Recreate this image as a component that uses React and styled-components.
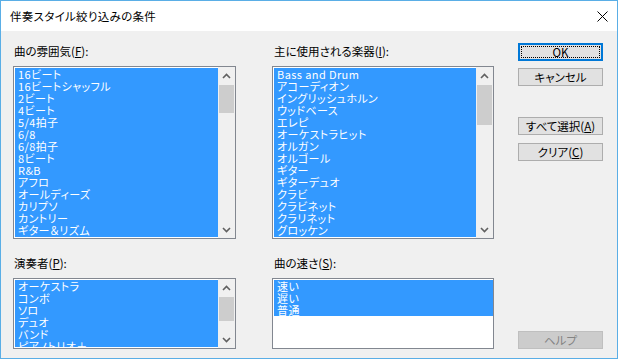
import React from "react";
import styled, { createGlobalStyle } from "styled-components";

const Global = createGlobalStyle`
  html, body { margin: 0; padding: 0; background: #ffffff; }
  body { font-family: "Noto Sans CJK JP", "Noto Sans", sans-serif; }
  * { box-sizing: border-box; }
`;

const Window = styled.div`
  width: 618px;
  height: 359px;
  border: 1px solid #5aaee6;
  background: #f0f0f0;
  display: flex;
  flex-direction: column;
  overflow: hidden;
`;

const TitleBar = styled.div`
  height: 30px;
  background: #ffffff;
  display: flex;
  align-items: center;
  justify-content: space-between;
  padding: 0 9px 0 9px;
  flex-shrink: 0;
`;

const Title = styled.div`
  font-size: 11.5px;
  color: #000;
  line-height: 14px;
  font-feature-settings: "palt";
  letter-spacing: 0.3px;
`;

const CloseBtn = styled.div`
  width: 12px;
  height: 12px;
  display: flex;
  align-items: center;
  justify-content: center;
`;

const Body = styled.div`
  flex: 1;
  display: flex;
  padding: 12px 0 10px 12px;
`;

const Column = styled.div`
  width: ${(p) => p.$w}px;
  margin-right: ${(p) => p.$mr}px;
  display: flex;
  flex-direction: column;
`;

const Label = styled.div`
  height: 16px;
  font-size: 11.5px;
  line-height: 16px;
  color: #000;
  margin-top: ${(p) => p.$mt || 0}px;
  margin-bottom: 7px;
  padding-left: ${(p) => p.$pl || 0}px;
  white-space: nowrap;
  font-feature-settings: "palt";
  u { text-decoration: underline; text-underline-offset: 1px; }
`;

const ListBox = styled.div`
  height: ${(p) => p.$h}px;
  border: 1px solid #828790;
  background: #ffffff;
  display: flex;
  padding: 1px 0 1px 1px;
`;

const Items = styled.div`
  flex: 1;
  overflow: hidden;
  align-self: stretch;
`;

const Item = styled.div`
  height: 12px;
  line-height: 12px;
  font-size: 11px;
  color: #ffffff;
  background: #3399ff;
  padding-left: 3px;
  white-space: nowrap;
  font-feature-settings: "palt";
  letter-spacing: 0.4px;
`;

const ScrollBar = styled.div`
  width: 17px;
  margin-top: -1px;
  margin-bottom: -1px;
  background: #f0f0f0;
  display: flex;
  flex-direction: column;
`;

const ArrowBtn = styled.div`
  height: 17px;
  display: flex;
  align-items: center;
  justify-content: center;
  flex-shrink: 0;
`;

const Track = styled.div`
  flex: 1;
  display: flex;
  flex-direction: column;
`;

const Thumb = styled.div`
  height: ${(p) => p.$h}px;
  margin: 1px 1px 0 1px;
  background: #cdcdcd;
  flex-shrink: 0;
`;

const Button = styled.div`
  width: 85px;
  height: 18px;
  margin-top: ${(p) => p.$mt || 0}px;
  background: ${(p) => (p.$disabled ? "#cccccc" : "#e1e1e1")};
  border: ${(p) =>
    p.$default ? "2px solid #0078d7" : p.$disabled ? "1px solid #bfbfbf" : "1px solid #adadad"};
  color: ${(p) => (p.$disabled ? "#838383" : "#000")};
  font-size: 11.5px;
  font-feature-settings: "palt";
  display: flex;
  align-items: center;
  justify-content: center;
  position: relative;
  line-height: 14px;
  u { text-decoration: underline; text-underline-offset: 1px; }
`;

const Focus = styled.div`
  position: absolute;
  inset: 1px;
  border: 1px dotted #000;
`;

const ButtonCol = styled.div`
  width: 86px;
  display: flex;
  flex-direction: column;
`;

const Spacer = styled.div`
  flex: 1;
`;

const Chevron = ({ up }) => (
  <svg width="9" height="6" viewBox="0 0 9 6">
    <path
      d={up ? "M1 5 L4.5 1.5 L8 5" : "M1 1 L4.5 4.5 L8 1"}
      fill="none"
      stroke="#606060"
      strokeWidth="1.6"
    />
  </svg>
);

const List = ({ items, h, thumb, noScroll }) => (
  <ListBox $h={h}>
    <Items>
      {items.map((t) => (
        <Item key={t}>{t}</Item>
      ))}
    </Items>
    {!noScroll && (
      <ScrollBar>
        <ArrowBtn>
          <Chevron up />
        </ArrowBtn>
        <Track>
          <Thumb $h={thumb} />
          <Spacer />
        </Track>
        <ArrowBtn>
          <Chevron />
        </ArrowBtn>
      </ScrollBar>
    )}
  </ListBox>
);

const moods = [
  "16ビート",
  "16ビートシャッフル",
  "2ビート",
  "4ビート",
  "5/4拍子",
  "6/8",
  "6/8拍子",
  "8ビート",
  "R&B",
  "アフロ",
  "オールディーズ",
  "カリプソ",
  "カントリー",
  "ギター＆リズム",
  "ゴスペル",
];

const instruments = [
  "Bass and Drum",
  "アコーディオン",
  "イングリッシュホルン",
  "ウッドベース",
  "エレピ",
  "オーケストラヒット",
  "オルガン",
  "オルゴール",
  "ギター",
  "ギターデュオ",
  "クラビ",
  "クラビネット",
  "クラリネット",
  "グロッケン",
  "コーラス",
];

const players = ["オーケストラ", "コンボ", "ソロ", "デュオ", "バンド", "ピアノトリオ＋"];

const speeds = ["速い", "遅い", "普通"];

export default function App() {
  return (
    <>
      <Global />
      <Window>
        <TitleBar>
          <Title>伴奏スタイル絞り込みの条件</Title>
          <CloseBtn>
            <svg width="11" height="11" viewBox="0 0 11 11">
              <path d="M0.5 0.5 L10.5 10.5 M10.5 0.5 L0.5 10.5" stroke="#000" strokeWidth="1" />
            </svg>
          </CloseBtn>
        </TitleBar>
        <Body>
          <Column $w={223} $mr={36}>
            <Label $pl={1}>
              曲の雰囲気(<u>F</u>):
            </Label>
            <List items={moods} h={173} thumb={28} />
            <Label $mt={16} $pl={1}>
              演奏者(<u>P</u>):
            </Label>
            <List items={players} h={71} thumb={24} />
          </Column>
          <Column $w={222} $mr={24}>
            <Label $pl={2}>
              主に使用される楽器(<u>I</u>):
            </Label>
            <List items={instruments} h={173} thumb={40} />
            <Label $mt={16} $pl={2}>
              曲の速さ(<u>S</u>):
            </Label>
            <List items={speeds} h={71} noScroll />
          </Column>
          <ButtonCol>
            <Button $default>
              <Focus />
              OK
            </Button>
            <Button $mt={7}>キャンセル</Button>
            <Button $mt={31}>
              すべて選択(<u>A</u>)
            </Button>
            <Button $mt={8}>
              クリア(<u>C</u>)
            </Button>
            <Spacer />
            <Button $disabled>ヘルプ</Button>
          </ButtonCol>
        </Body>
      </Window>
    </>
  );
}
